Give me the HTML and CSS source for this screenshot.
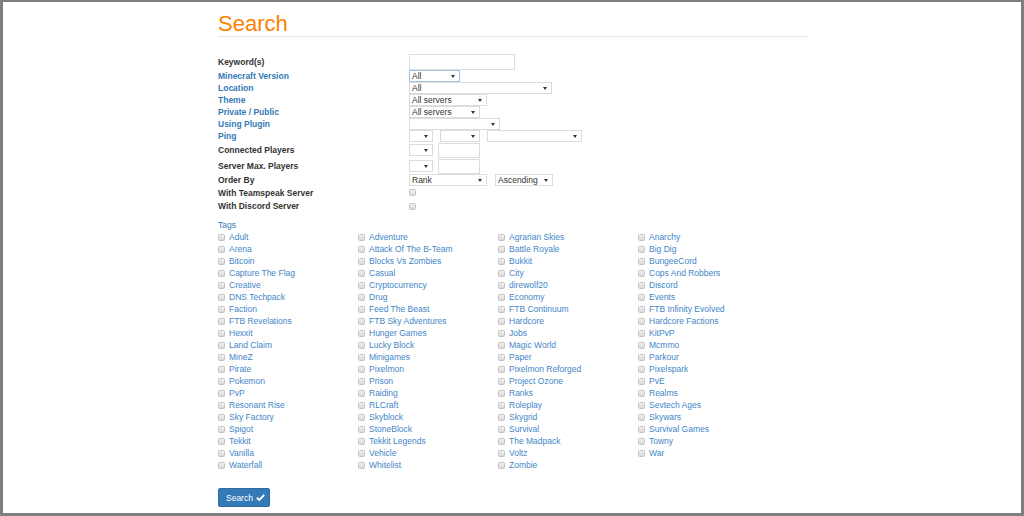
FILE: index.html
```html
<!DOCTYPE html>
<html lang="en">
<head>
  <meta charset="UTF-8">
  <title>Search</title>
  <link rel="stylesheet" href="styles.css">
</head>
<body>
  <div class="page">
    <h1 class="title">Search</h1>

    <form class="search-form">
      <div class="row tall">
        <label class="label">Keyword(s)</label>
        <div class="fields"><input type="text" class="text w106"></div>
      </div>
      <div class="row">
        <a class="label link">Minecraft Version</a>
        <div class="fields"><span class="sel w51 focus"><select><option>All</option></select></span></div>
      </div>
      <div class="row">
        <a class="label link">Location</a>
        <div class="fields"><span class="sel w143"><select><option>All</option></select></span></div>
      </div>
      <div class="row">
        <a class="label link">Theme</a>
        <div class="fields"><span class="sel w78"><select><option>All servers</option></select></span></div>
      </div>
      <div class="row">
        <a class="label link">Private / Public</a>
        <div class="fields"><span class="sel w71"><select><option>All servers</option></select></span></div>
      </div>
      <div class="row">
        <a class="label link">Using Plugin</a>
        <div class="fields"><span class="sel w91"><select><option></option></select></span></div>
      </div>
      <div class="row">
        <a class="label link">Ping</a>
        <div class="fields">
          <span class="sel w24"><select><option></option></select></span>
          <span class="sel w40"><select><option></option></select></span>
          <span class="sel w95"><select><option></option></select></span>
        </div>
      </div>
      <div class="row tall">
        <label class="label">Connected Players</label>
        <div class="fields narrow">
          <span class="sel w24"><select><option></option></select></span>
          <input type="text" class="text num">
        </div>
      </div>
      <div class="row tall">
        <label class="label">Server Max. Players</label>
        <div class="fields narrow">
          <span class="sel w24"><select><option></option></select></span>
          <input type="text" class="text num">
        </div>
      </div>
      <div class="row">
        <label class="label">Order By</label>
        <div class="fields wide">
          <span class="sel w78"><select><option>Rank</option></select></span>
          <span class="sel w58"><select><option>Ascending</option></select></span>
        </div>
      </div>
      <div class="row ts">
        <label class="label">With Teamspeak Server</label>
        <div class="fields"><input type="checkbox" class="check"></div>
      </div>
      <div class="row dc">
        <label class="label">With Discord Server</label>
        <div class="fields"><input type="checkbox" class="check"></div>
      </div>

      <div class="tags-title">Tags</div>
      <div class="tags">
        <label class="tag"><input type="checkbox" class="check">Adult</label>
        <label class="tag"><input type="checkbox" class="check">Adventure</label>
        <label class="tag"><input type="checkbox" class="check">Agrarian Skies</label>
        <label class="tag"><input type="checkbox" class="check">Anarchy</label>
        <label class="tag"><input type="checkbox" class="check">Arena</label>
        <label class="tag"><input type="checkbox" class="check">Attack Of The B-Team</label>
        <label class="tag"><input type="checkbox" class="check">Battle Royale</label>
        <label class="tag"><input type="checkbox" class="check">Big Dig</label>
        <label class="tag"><input type="checkbox" class="check">Bitcoin</label>
        <label class="tag"><input type="checkbox" class="check">Blocks Vs Zombies</label>
        <label class="tag"><input type="checkbox" class="check">Bukkit</label>
        <label class="tag"><input type="checkbox" class="check">BungeeCord</label>
        <label class="tag"><input type="checkbox" class="check">Capture The Flag</label>
        <label class="tag"><input type="checkbox" class="check">Casual</label>
        <label class="tag"><input type="checkbox" class="check">City</label>
        <label class="tag"><input type="checkbox" class="check">Cops And Robbers</label>
        <label class="tag"><input type="checkbox" class="check">Creative</label>
        <label class="tag"><input type="checkbox" class="check">Cryptocurrency</label>
        <label class="tag"><input type="checkbox" class="check">direwolf20</label>
        <label class="tag"><input type="checkbox" class="check">Discord</label>
        <label class="tag"><input type="checkbox" class="check">DNS Techpack</label>
        <label class="tag"><input type="checkbox" class="check">Drug</label>
        <label class="tag"><input type="checkbox" class="check">Economy</label>
        <label class="tag"><input type="checkbox" class="check">Events</label>
        <label class="tag"><input type="checkbox" class="check">Faction</label>
        <label class="tag"><input type="checkbox" class="check">Feed The Beast</label>
        <label class="tag"><input type="checkbox" class="check">FTB Continuum</label>
        <label class="tag"><input type="checkbox" class="check">FTB Infinity Evolved</label>
        <label class="tag"><input type="checkbox" class="check">FTB Revelations</label>
        <label class="tag"><input type="checkbox" class="check">FTB Sky Adventures</label>
        <label class="tag"><input type="checkbox" class="check">Hardcore</label>
        <label class="tag"><input type="checkbox" class="check">Hardcore Factions</label>
        <label class="tag"><input type="checkbox" class="check">Hexxit</label>
        <label class="tag"><input type="checkbox" class="check">Hunger Games</label>
        <label class="tag"><input type="checkbox" class="check">Jobs</label>
        <label class="tag"><input type="checkbox" class="check">KitPvP</label>
        <label class="tag"><input type="checkbox" class="check">Land Claim</label>
        <label class="tag"><input type="checkbox" class="check">Lucky Block</label>
        <label class="tag"><input type="checkbox" class="check">Magic World</label>
        <label class="tag"><input type="checkbox" class="check">Mcmmo</label>
        <label class="tag"><input type="checkbox" class="check">MineZ</label>
        <label class="tag"><input type="checkbox" class="check">Minigames</label>
        <label class="tag"><input type="checkbox" class="check">Paper</label>
        <label class="tag"><input type="checkbox" class="check">Parkour</label>
        <label class="tag"><input type="checkbox" class="check">Pirate</label>
        <label class="tag"><input type="checkbox" class="check">Pixelmon</label>
        <label class="tag"><input type="checkbox" class="check">Pixelmon Reforged</label>
        <label class="tag"><input type="checkbox" class="check">Pixelspark</label>
        <label class="tag"><input type="checkbox" class="check">Pokemon</label>
        <label class="tag"><input type="checkbox" class="check">Prison</label>
        <label class="tag"><input type="checkbox" class="check">Project Ozone</label>
        <label class="tag"><input type="checkbox" class="check">PvE</label>
        <label class="tag"><input type="checkbox" class="check">PvP</label>
        <label class="tag"><input type="checkbox" class="check">Raiding</label>
        <label class="tag"><input type="checkbox" class="check">Ranks</label>
        <label class="tag"><input type="checkbox" class="check">Realms</label>
        <label class="tag"><input type="checkbox" class="check">Resonant Rise</label>
        <label class="tag"><input type="checkbox" class="check">RLCraft</label>
        <label class="tag"><input type="checkbox" class="check">Roleplay</label>
        <label class="tag"><input type="checkbox" class="check">Sevtech Ages</label>
        <label class="tag"><input type="checkbox" class="check">Sky Factory</label>
        <label class="tag"><input type="checkbox" class="check">Skyblock</label>
        <label class="tag"><input type="checkbox" class="check">Skygrid</label>
        <label class="tag"><input type="checkbox" class="check">Skywars</label>
        <label class="tag"><input type="checkbox" class="check">Spigot</label>
        <label class="tag"><input type="checkbox" class="check">StoneBlock</label>
        <label class="tag"><input type="checkbox" class="check">Survival</label>
        <label class="tag"><input type="checkbox" class="check">Survival Games</label>
        <label class="tag"><input type="checkbox" class="check">Tekkit</label>
        <label class="tag"><input type="checkbox" class="check">Tekkit Legends</label>
        <label class="tag"><input type="checkbox" class="check">The Madpack</label>
        <label class="tag"><input type="checkbox" class="check">Towny</label>
        <label class="tag"><input type="checkbox" class="check">Vanilla</label>
        <label class="tag"><input type="checkbox" class="check">Vehicle</label>
        <label class="tag"><input type="checkbox" class="check">Voltz</label>
        <label class="tag"><input type="checkbox" class="check">War</label>
        <label class="tag"><input type="checkbox" class="check">Waterfall</label>
        <label class="tag"><input type="checkbox" class="check">Whitelist</label>
        <label class="tag"><input type="checkbox" class="check">Zombie</label>
      </div>

      <button type="button" class="btn">Search
        <svg class="btn-icon" viewBox="0 0 10 8" width="9" height="7"><path d="M0.8 4.2 L3.6 6.8 L9.2 1.2" fill="none" stroke="#fff" stroke-width="2.2"/></svg>
      </button>
    </form>
  </div>
</body>
</html>
```

FILE: styles.css
```css
* {
  box-sizing: border-box;
}

html,
body {
  margin: 0;
  height: 100%;
}

body {
  border: 3px solid #7f7f7f;
  border-top-width: 2px;
  background: #fff;
  overflow: hidden;
  font-family: "Liberation Sans", Arial, sans-serif;
  font-size: 8.5px;
  color: #333;
}

.page {
  width: 594px;
  margin: 0 auto;
  padding-left: 3px;
}

.title {
  margin: 10px 0 0;
  font-size: 22px;
  font-weight: normal;
  line-height: 24px;
  color: #ff8000;
  border-bottom: 1px solid #e6e6e6;
}

.search-form {
  margin-top: 17px;
}

.row {
  display: flex;
  align-items: center;
  height: 12px;
}

.row.tall {
  height: 16px;
}

.row.ts {
  height: 13px;
}

.row.dc {
  height: 14px;
}

.label {
  width: 191px;
  font-weight: bold;
  color: #333;
}

.label.link {
  color: #337ab7;
}

.fields {
  display: flex;
  align-items: center;
  gap: 7px;
}

.fields.narrow {
  gap: 5px;
}

.fields.wide {
  gap: 8px;
}

.text {
  height: 16px;
  border: 1px solid #dcdcdc;
  background: #fff;
  margin: 0;
  padding: 0 3px;
  font: inherit;
}

.w106 { width: 106px; }
.num { width: 42px; height: 15px; }

.sel {
  position: relative;
  display: block;
  height: 12px;
}

.sel select {
  appearance: none;
  -webkit-appearance: none;
  display: block;
  width: 100%;
  height: 12px;
  margin: 0;
  padding: 0 2px;
  border: 1px solid #dcdcdc;
  border-radius: 0;
  background: #fff;
  font: inherit;
  line-height: 10px;
  color: #333;
}

.sel.focus select {
  border-color: #9fc3e6;
}

.sel::after {
  content: "";
  position: absolute;
  right: 5px;
  top: 5px;
  border-left: 2px solid transparent;
  border-right: 2px solid transparent;
  border-top: 3px solid #333;
}

.w24 { width: 24px; }
.w40 { width: 40px; }
.w51 { width: 51px; }
.w58 { width: 58px; }
.w71 { width: 71px; }
.w78 { width: 78px; }
.w91 { width: 91px; }
.w95 { width: 95px; }
.w143 { width: 143px; }

.check {
  appearance: none;
  -webkit-appearance: none;
  width: 7px;
  height: 7px;
  margin: 0;
  border: 1px solid #c2c2c2;
  border-radius: 1.5px;
  background: linear-gradient(#f2f2f2, #dadada);
}

.tags-title {
  margin-top: 6px;
  height: 12px;
  line-height: 12px;
  color: #337ab7;
}

.tags {
  display: grid;
  grid-template-columns: repeat(4, 140px);
  grid-auto-rows: 12px;
}

.tag {
  display: flex;
  align-items: center;
  gap: 4px;
  color: #3f86c7;
  white-space: nowrap;
}

.btn {
  display: flex;
  align-items: center;
  gap: 3px;
  margin-top: 17px;
  width: 52px;
  height: 19px;
  padding: 0 0 0 7px;
  border: 1px solid #2e6da4;
  border-radius: 2px;
  background: #337ab7;
  color: #fff;
  font: inherit;
}

.btn-icon {
  display: block;
}
```
